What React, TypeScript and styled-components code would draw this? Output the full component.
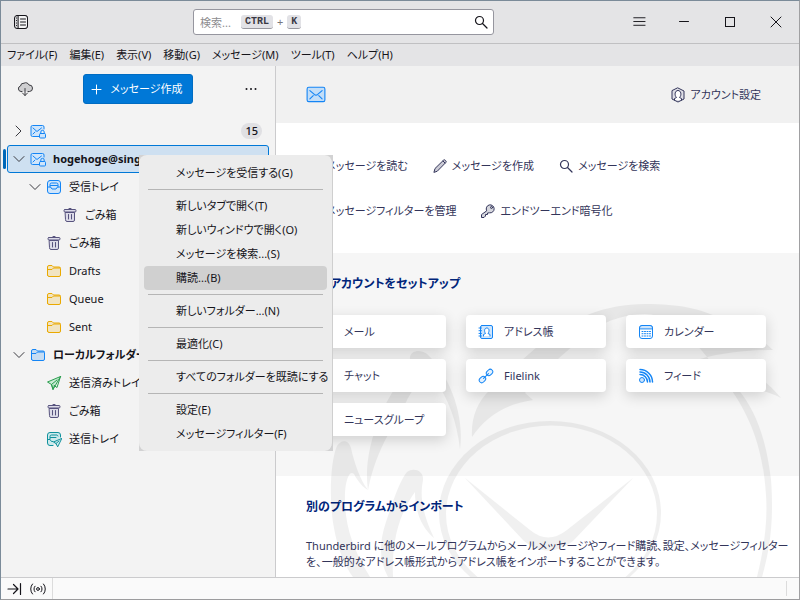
import React from "react";
import styled, { createGlobalStyle, css } from "styled-components";

const GlobalStyle = createGlobalStyle`
  *, *::before, *::after { box-sizing: border-box; }
  body {
    margin: 0;
    color: #15141a;
    font: 11px/16px "Noto Sans", "Noto Sans CJK JP", sans-serif;
    font-feature-settings: "palt";
  }
  button {
    margin: 0;
    padding: 0;
    border: 0;
    background: none;
    color: inherit;
    font: inherit;
    font-feature-settings: inherit;
    white-space: nowrap;
  }
  ul { list-style: none; margin: 0; padding: 0; }
  a { color: inherit; text-decoration: none; }
`;

/* ---------- icons ---------- */

const Svg = styled.svg<{ $size?: number }>`
  display: block;
  flex: none;
  width: ${(p) => p.$size ?? 16}px;
  height: ${(p) => p.$size ?? 16}px;
  fill: none;
  stroke: currentColor;
  stroke-linecap: round;
  stroke-linejoin: round;
`;

type IconProps = { size?: number };
const icon = (drawing: React.ReactNode, box = "0 0 16 16") =>
  function Icon({ size }: IconProps) {
    return (
      <Svg $size={size} viewBox={box} aria-hidden="true">
        {drawing}
      </Svg>
    );
  };

const SpacesIcon = icon(
  <>
    <rect x="1.5" y="1.5" width="13" height="13" rx="2.5" fill="#d8d8da" />
    <path d="M5.5 1.5h6.5a2.5 2.5 0 0 1 2.5 2.5v8a2.5 2.5 0 0 1-2.5 2.5H5.5z" fill="#f4f4f5" />
    <path d="M7.5 5h5M7.5 8h5M7.5 11h5M3.5 4v.1M3.5 6.5v.1M3.5 9v.1M3.5 11.5v.1" />
  </>
);
const SearchIcon = icon(
  <>
    <circle cx="6.5" cy="6.5" r="4" strokeWidth="1.2" />
    <path d="M9.5 9.5l4.500 4.500" strokeWidth="1.2" />
  </>
);
const MenuIcon = icon(<path d="M4 3.500h12M4 7.500h12M4 11.500h12" />, "0 0 17 16");
const MinimizeIcon = icon(<path d="M3.500 7.500h9" />);
const MaximizeIcon = icon(<rect x="3.500" y="3.500" width="9" height="9" strokeLinejoin="miter" />);
const CloseIcon = icon(<path d="M3 3l10 10M13 3L3 13" />);
const CloudIcon = icon(
  <>
    <path
      d="M5 10.500H4A2.800 2.800 0 0 1 3.500 5 3.200 3.200 0 0 1 7 2.200 3.500 3.500 0 0 1 12 4a3.200 3.200 0 0 1 .5 6.500H11"
      fill="#cfcfd1"
      stroke="#3d3d42"
    />
    <path d="M8 7.500v7M5.500 12L8 14.500 10.500 12" stroke="#3d3d42" />
  </>
);
const PlusIcon = icon(<path d="M8.500 4v9M4 8.500h9" />);
const DotsIcon = icon(
  <g fill="currentColor" stroke="none">
    <circle cx="3.500" cy="8" r="1" />
    <circle cx="8" cy="8" r="1" />
    <circle cx="12.500" cy="8" r="1" />
  </g>
);
const RightIcon = icon(<path d="M3 1l5 5-5 5" />, "0 0 12 12");
const DownIcon = icon(<path d="M1 3.500l5 5 5-5" />, "0 0 12 12");
const SecureMailIcon = icon(
  <>
    <path d="M9 13.500H2.500a1.500 1.500 0 0 1-1.500-1.500V4a1.500 1.500 0 0 1 1.500-1.500h10A1.500 1.500 0 0 1 14 4v2" fill="#cfe5fb" />
    <path d="M3 5l4 3.500 4.500-3.500M3 11l2-2" />
    <rect x="9.500" y="10.500" width="6" height="4.500" rx="1" fill="#cfe5fb" />
    <path d="M10.800 10.500V9a1.700 1.700 0 0 1 3.400 0v1.500" />
  </>
);
const InboxIcon = icon(
  <>
    <rect x="1.500" y="1.500" width="13" height="13" rx="2.500" fill="#cfe5fb" />
    <path d="M1.500 8H4.500l1.500 2h4l1.500-2h3M4 8V5.500A1.500 1.500 0 0 1 5.500 4h5A1.500 1.500 0 0 1 12 5.500V8" />
    <path d="M4.500 6.500h7" />
  </>
);
const TrashIcon = icon(
  <>
    <path d="M3.500 5.500h9V13a1.500 1.500 0 0 1-1.500 1.500H5A1.500 1.500 0 0 1 3.500 13z" fill="#dcdbe8" />
    <rect x="2" y="2.500" width="12" height="2.500" rx="1" fill="#dcdbe8" />
    <path d="M6 2.500C6 .9 10 .9 10 2.500M6.500 7.500v4.500M9.500 7.500v4.500" />
  </>
);
const FolderIcon = icon(
  <path
    d="M1.500 12V4A1.500 1.500 0 0 1 3 2.500h3L7.500 4H13A1.500 1.500 0 0 1 14.500 5.500V12A1.500 1.500 0 0 1 13 13.500H3A1.500 1.500 0 0 1 1.500 12zM1.500 6.500H6L7.500 5H14"
    fill="currentColor"
    fillOpacity="0.200"
  />
);
const SentIcon = icon(
  <>
    <path d="M14.500 1.500L1.500 7l4 2.500 1.500 5L14.500 1.500z" fill="#c9ecd5" />
    <path d="M5.500 9.500L11 5M5.500 9.500L7 14.500l1.500-4" />
    <path d="M8 10.500l3 2L14.500 1.500" />
  </>
);
const OutboxIcon = icon(
  <>
    <path d="M7 14.500H4A2.500 2.500 0 0 1 1.500 12V4A2.500 2.500 0 0 1 4 1.500h8A2.500 2.500 0 0 1 14.500 4v2" fill="#cdeaec" />
    <path d="M1.500 8.500H4l1.500 2H7M4 8V5.500A1.500 1.500 0 0 1 5.500 4h5.500A1.500 1.500 0 0 1 12 5M4.500 6.500H10" />
    <path d="M15.500 7.500L7.500 11l2.500 1.500 1.500 3zM10 12.500l3-2.500" fill="#cdeaec" />
  </>
);
const MailIcon = icon(
  <>
    <rect x="1" y="1.500" width="16" height="13" rx="1.500" fill="#c3def8" />
    <path d="M3.500 4.500l4 3.500q1.500 1.200 3 0l4-3.500M3.500 12l3-3M14.500 12l-3-3" />
  </>,
  "0 0 18 17"
);
const SmallMailIcon = icon(
  <>
    <rect x="1.500" y="3" width="12" height="10" rx="1.500" fill="#cfe5fb" />
    <path d="M3.500 5.500l4 3 4-3" />
  </>
);
const AccountIcon = icon(
  <>
    <path d="M8 1l6 3v8l-6 3-6-3V4z" fill="#dedee6" />
    <path d="M4.500 13v-1.500l2-1C4 8 5 3.500 8 3.500s4 4.500 1.500 7l2 1V13" fill="#fff" />
  </>
);
const PencilIcon = icon(
  <path d="M2 14l1-3.500L11.500 2.200a1.200 1.200 0 0 1 1.700 0l.6.6a1.200 1.200 0 0 1 0 1.700L5.500 13zM11 3l2 2" fill="currentColor" fillOpacity="0.250" />
);
const KeyIcon = icon(
  <>
    <path
      d="M6.500 7.500A4 4 0 1 1 9.500 9.800L7.500 10v1.500H5.500V13L4 14.500H1.500V12z"
      fill="currentColor"
      fillOpacity="0.200"
    />
    <circle cx="11.500" cy="4.500" r="1" />
  </>
);
const AddressIcon = icon(
  <>
    <rect x="2.500" y="1.500" width="12" height="13" rx="1.500" fill="#cfe5fb" />
    <path d="M1 4h2.500M1 6.700h2.500M1 9.400h2.500M1 12h2.500" />
    <path d="M5.500 12v-1.500l2-1C5.800 7 6.500 4 8.800 4s3 3 1.200 5.500l2 1V12" fill="#fff" />
  </>
);
const CalendarIcon = icon(
  <>
    <rect x="1.500" y="1.500" width="13" height="13" rx="2.500" />
    <path d="M1.500 4.500V4A2.500 2.500 0 0 1 4 1.500h8A2.500 2.500 0 0 1 14.500 4v.5z" fill="#cfe5fb" />
    <path d="M4 7.500h8.500M4 9.700h8.500M4 12h8.500" strokeDasharray="1 1.500" />
  </>
);
const LinkIcon = icon(
  <g transform="rotate(-45 8 8)">
    <rect x="-.5" y="5.500" width="7" height="5" rx="2.500" fill="#e4f1fd" />
    <rect x="9.500" y="5.500" width="7" height="5" rx="2.500" fill="#e4f1fd" />
    <path d="M4.500 8h7" />
  </g>
);
const FeedIcon = icon(
  <>
    <circle cx="4" cy="12" r="2.500" fill="#cfe5fb" />
    <path d="M2 1.500A12.500 12.500 0 0 1 14.500 14M2 4A10 10 0 0 1 12 14M2 6.500A7.500 7.500 0 0 1 9.500 14" strokeWidth="1.500" />
  </>
);
const ChatIcon = icon(<path d="M2.500 2.500h11v8H7l-3 3v-3H2.500z" fill="#cfe5fb" />);
const NewsIcon = icon(
  <>
    <rect x="2" y="2" width="12" height="12" rx="2" fill="#cfe5fb" />
    <path d="M5 5.500h6M5 8h6M5 10.500h6" />
  </>
);
const FilterIcon = icon(<path d="M2 2.500h12L9.500 8v5l-3 1.500V8z" />);
const CollapseIcon = icon(<path d="M2 8h9M7.500 3.500L12 8l-4.500 4.500M14.500 2.500v11" strokeWidth="1.200" />);
const OnlineIcon = icon(
  <>
    <circle cx="8" cy="8" r="1.400" />
    <path d="M5 5.200a4 4 0 0 0 0 5.600M11 5.200a4 4 0 0 1 0 5.600M2.500 3a7.500 7.500 0 0 0 0 10M13.500 3a7.500 7.500 0 0 1 0 10" />
  </>
);

/* ---------- window frame ---------- */

const Window = styled.div`
  position: relative;
  display: flex;
  flex-direction: column;
  height: 100vh;
  overflow: hidden;
  background: #f3f3f3;
  border: 1px solid #7b8b99;
  border-right-color: #a0a0a2;
  border-bottom-color: #9c9c9e;
`;

const TitleBar = styled.header`
  display: grid;
  grid-template-columns: 192px minmax(0, 301px) 1fr;
  align-items: center;
  height: 43px;
  flex: none;
  background: #e4e4e6;
  border-bottom: 1px solid #c0c0c2;
`;

const SpacesButton = styled.button`
  justify-self: start;
  padding: 4px 12px;
`;

const SearchBox = styled.div`
  display: grid;
  grid-template-columns: minmax(0, 1fr) 20px;
  align-items: center;
  height: 26px;
  background: #fff;
  border: 1px solid #96969f;
  border-radius: 3px;
`;

const SearchInput = styled.input`
  grid-area: 1 / 1;
  width: 100%;
  height: 24px;
  padding: 0 6px;
  border: 0;
  outline: 0;
  background: none;
  font: inherit;
  font-feature-settings: inherit;
  &::placeholder { color: #8d8d90; opacity: 1; }
`;

const Shortcut = styled.span`
  grid-area: 1 / 1;
  display: flex;
  align-items: center;
  gap: 4px;
  padding-left: 47px;
  color: #77777c;
  pointer-events: none;
`;

const Key = styled.kbd`
  padding: 0 4px;
  border-radius: 3px;
  border-bottom: 1px solid #98989f;
  background: #e2e2e6;
  color: #3a3944;
  font: bold 10px/13px "Liberation Mono", monospace;
`;

const WindowButtons = styled.div`
  display: flex;
  justify-content: flex-end;
`;

const WindowButton = styled.button`
  display: grid;
  place-items: center;
  width: 46px;
  height: 42px;
`;

const MenuBar = styled.nav`
  display: flex;
  flex: none;
  height: 22px;
  background: #e4e4e6;
`;

const MenuBarItem = styled.button`
  padding: 0 6px;
`;

const Body = styled.div`
  display: flex;
  flex: 1;
  min-height: 0;
`;

/* ---------- folder pane ---------- */

const FolderPane = styled.aside`
  flex: 0 0 275px;
  border-right: 1px solid #cbcbcd;
  background: #f3f3f3;
`;

const PaneHeader = styled.div`
  display: flex;
  align-items: center;
  justify-content: space-between;
  height: 46px;
  padding: 0 16px;
`;

const ComposeButton = styled.button`
  display: flex;
  align-items: center;
  gap: 6px;
  height: 30px;
  padding: 0 9px 0 4px;
  border: 1px solid #006cc2;
  border-radius: 3px;
  background: #0078d7;
  color: #fff;
`;

const Tree = styled.ul`
  padding: 5px 6px;
`;

const Row = styled.li<{ $level: number; $selected?: boolean; $bold?: boolean }>`
  position: relative;
  display: flex;
  align-items: center;
  height: 28px;
  padding-left: ${(p) => 5 + p.$level * 16}px;
  padding-right: 6px;
  border: 1px solid transparent;
  border-radius: 3px;
  white-space: nowrap;
  font-weight: ${(p) => (p.$bold ? 700 : 400)};
  ${(p) =>
    p.$selected &&
    css`
      border-color: #0078d7;
      background: #cee0f1;
      &::before {
        content: "";
        position: absolute;
        left: -5px;
        top: 3px;
        width: 3px;
        height: 20px;
        border-radius: 2px;
        background: #0067b8;
      }
    `}
`;

const Twisty = styled.button`
  display: grid;
  place-items: center;
  width: 12px;
  height: 20px;
  margin-right: 5px;
  flex: none;
  color: #3a3a40;
`;

const TwistySpace = styled.span`
  width: 17px;
  flex: none;
`;

const Tint = styled.span<{ $color: string }>`
  display: block;
  flex: none;
  color: ${(p) => p.$color};
`;

const RowName = styled.span`
  flex: 1;
  margin-left: 7px;
`;

const Badge = styled.span`
  padding: 0 4px;
  border-radius: 8px;
  background: #e0e0e3;
  font-weight: 500;
`;

/* ---------- account page ---------- */

const Main = styled.main`
  position: relative;
  flex: 1;
  min-width: 0;
  overflow: hidden;
  background: #fff;
  color: #33355a;
`;

const AccountHeader = styled.div`
  display: flex;
  align-items: center;
  justify-content: space-between;
  height: 57px;
  padding: 0 38px 0 30px;
  background: #f1f1f1;
`;

const IconLink = styled.a`
  display: flex;
  align-items: center;
  gap: 4px;
  white-space: nowrap;
`;

const Links = styled.div`
  display: flex;
  flex-wrap: wrap;
  column-gap: 24px;
  height: 130px;
  padding: 20px 30px;
`;

const LinkItem = styled(IconLink)`
  height: 45px;
`;

const Section = styled.section<{ $shaded?: boolean }>`
  padding: 20px 30px 40px;
  background: ${(p) => (p.$shaded ? "#f6f6f6" : "transparent")};
`;

const SectionTitle = styled.h2`
  margin: 0;
  color: #00257a;
  font-size: 12px;
  line-height: 22px;
`;

const Cards = styled.div`
  position: relative;
  z-index: 1;
  display: grid;
  grid-template-columns: repeat(auto-fill, 140px);
  gap: 11px 20px;
  margin-top: 20px;
`;

const Card = styled.button`
  display: flex;
  align-items: center;
  gap: 10px;
  height: 33px;
  padding: 0 12px;
  border-radius: 4px;
  background: #fff;
  box-shadow: 0 4px 14px rgba(0, 0, 0, 0.16);
`;

const Paragraph = styled.p`
  margin: 20px 0 0;
  white-space: nowrap;
`;

const Watermark = styled.svg`
  position: absolute;
  left: 0;
  top: 187px;
  width: 523px;
  height: 324px;
  fill: #000;
  opacity: 0.055;
  pointer-events: none;
`;

/* ---------- context menu ---------- */

const MenuShadow = styled.div`
  position: absolute;
  z-index: 2;
  left: 138px;
  top: 154px;
  width: 194px;
  background: #d2d2d3;
`;

const MenuList = styled.ul`
  padding: 6px 5px 5px;
  border-right: 1px solid #cfcfcf;
  border-radius: 8px;
  background: #ececec;
`;

const MenuItem = styled.button<{ $active?: boolean }>`
  display: block;
  width: 100%;
  height: 24px;
  padding: 0 0 0 32px;
  border-radius: 4px;
  text-align: left;
  background: ${(p) => (p.$active ? "#d0d0d0" : "none")};
`;

const Separator = styled.li`
  height: 1px;
  margin: 4px;
  background: #b5b5b5;
`;

/* ---------- status bar ---------- */

const StatusBar = styled.footer`
  display: flex;
  flex: none;
  height: 22px;
  background: #fafafa;
  border-top: 1px solid #cbcbcd;
`;

const StatusIcons = styled.div`
  display: flex;
  align-items: center;
  gap: 8px;
  padding: 0 6px 0 5px;
  border-right: 1px solid #dcdcdc;
`;

const StatusEnd = styled.div`
  width: 13px;
  margin: 3px 0 3px auto;
  border-left: 1px solid #dcdcdc;
`;

/* ---------- data ---------- */

const menuBar = ["ファイル(F)", "編集(E)", "表示(V)", "移動(G)", "メッセージ(M)", "ツール(T)", "ヘルプ(H)"];

type Folder = {
  name: string;
  level: number;
  Icon: React.ComponentType<IconProps>;
  color: string;
  twisty?: "open" | "closed";
  bold?: boolean;
  selected?: boolean;
  count?: number;
};

const BLUE = "#1485f5";
const PURPLE = "#57537e";
const YELLOW = "#eaa900";

const folders: Folder[] = [
  { name: "", level: 0, Icon: SecureMailIcon, color: BLUE, twisty: "closed", count: 15 },
  { name: "hogehoge@sing", level: 0, Icon: SecureMailIcon, color: BLUE, twisty: "open", bold: true, selected: true },
  { name: "受信トレイ", level: 1, Icon: InboxIcon, color: BLUE, twisty: "open" },
  { name: "ごみ箱", level: 2, Icon: TrashIcon, color: PURPLE },
  { name: "ごみ箱", level: 1, Icon: TrashIcon, color: PURPLE },
  { name: "Drafts", level: 1, Icon: FolderIcon, color: YELLOW },
  { name: "Queue", level: 1, Icon: FolderIcon, color: YELLOW },
  { name: "Sent", level: 1, Icon: FolderIcon, color: YELLOW },
  { name: "ローカルフォルダー", level: 0, Icon: FolderIcon, color: BLUE, twisty: "open", bold: true },
  { name: "送信済みトレイ", level: 1, Icon: SentIcon, color: "#2a9d4e" },
  { name: "ごみ箱", level: 1, Icon: TrashIcon, color: PURPLE },
  { name: "送信トレイ", level: 1, Icon: OutboxIcon, color: "#0f919c" },
];

const links = [
  { name: "メッセージを読む", Icon: MailIcon },
  { name: "メッセージを作成", Icon: PencilIcon },
  { name: "メッセージを検索", Icon: SearchIcon },
  { name: "メッセージフィルターを管理", Icon: FilterIcon },
  { name: "エンドツーエンド暗号化", Icon: KeyIcon },
];

const cards = [
  { name: "メール", Icon: SmallMailIcon },
  { name: "アドレス帳", Icon: AddressIcon },
  { name: "カレンダー", Icon: CalendarIcon },
  { name: "チャット", Icon: ChatIcon },
  { name: "Filelink", Icon: LinkIcon },
  { name: "フィード", Icon: FeedIcon },
  { name: "ニュースグループ", Icon: NewsIcon },
];

const contextMenu = [
  ["メッセージを受信する(G)"],
  ["新しいタブで開く(T)", "新しいウィンドウで開く(O)", "メッセージを検索...(S)", "購読...(B)"],
  ["新しいフォルダー...(N)"],
  ["最適化(C)"],
  ["すべてのフォルダーを既読にする"],
  ["設定(E)", "メッセージフィルター(F)"],
];

function FolderRow({ folder }: { folder: Folder }) {
  const { name, level, Icon, color, twisty, bold, selected, count } = folder;
  return (
    <Row role="treeitem" aria-selected={!!selected} $level={level} $selected={selected} $bold={bold}>
      {twisty ? (
        <Twisty aria-label={twisty === "open" ? "折りたたむ" : "展開"}>
          {twisty === "open" ? <DownIcon size={12} /> : <RightIcon size={12} />}
        </Twisty>
      ) : (
        <TwistySpace />
      )}
      <Tint $color={color}>
        <Icon />
      </Tint>
      <RowName>{name}</RowName>
      {count && <Badge>{count}</Badge>}
    </Row>
  );
}

function Bird() {
  return (
    <Watermark viewBox="276 253 523 324" aria-hidden="true">
      <path d="M410 357C411 350 421 349 427 354C447 372 465 412 460 449C457 422 448 397 435 381C424 372 416 384 408 398C396 424 377 445 368 490C360 480 354 462 351 448C348 439 341 440 337 446C330 462 329 502 334 528C338 550 345 566 353 577H388C379 560 379 543 386 522C392 504 400 480 407 472C414 467 424 471 423 480C419 498 424 517 434 538C422 528 415 512 415 492C402 510 391 536 393 577H370C350 545 344 520 345 492C346 478 350 470 354 474C358 482 364 488 368 490C365 470 368 444 382 412C392 390 406 372 410 367C416 360 409 362 410 357Z" />
      <path d="M472 437C471 418 477 402 490 390C510 371 526 356 545 340C572 318 606 304 645 304C680 304 701 309 722 319C742 328 757 335 773 350C744 350 722 353 700 359C727 359 756 368 781 398C766 390 752 388 738 389C755 410 766 437 771 480C774 520 770 549 762 577H757C764 549 768 520 766 495C763 446 749 415 730 388C706 354 678 315 645 314C616 315 593 326 575 344C555 362 539 374 525 393L533 400C506 404 486 416 472 437Z" />
      <path
        fillRule="evenodd"
        d="M439 513a111 92 0 1 0 222 0a111 92 0 1 0-222 0ZM446 514a105 88 0 1 0 211 0a105 88 0 1 0-211 0Z"
      />
      <path d="M465 478L530 530Q548 545 567 530L633 478L573 541Q548 560 524 541Z" />
    </Watermark>
  );
}

export default function App() {
  return (
    <>
      <GlobalStyle />
      <Window>
        <TitleBar>
          <SpacesButton aria-label="スペースツールバー">
            <SpacesIcon />
          </SpacesButton>
          <SearchBox>
            <SearchInput type="search" placeholder="検索..." aria-label="検索" />
            <Shortcut>
              <Key>CTRL</Key>+<Key>K</Key>
            </Shortcut>
            <button aria-label="検索を実行">
              <SearchIcon />
            </button>
          </SearchBox>
          <WindowButtons>
            <WindowButton aria-label="メニュー">
              <MenuIcon />
            </WindowButton>
            <WindowButton aria-label="最小化">
              <MinimizeIcon />
            </WindowButton>
            <WindowButton aria-label="最大化">
              <MaximizeIcon />
            </WindowButton>
            <WindowButton aria-label="閉じる">
              <CloseIcon />
            </WindowButton>
          </WindowButtons>
        </TitleBar>
        <MenuBar>
          {menuBar.map((name) => (
            <MenuBarItem key={name}>{name}</MenuBarItem>
          ))}
        </MenuBar>
        <Body>
          <FolderPane>
            <PaneHeader>
              <button aria-label="メッセージを受信">
                <CloudIcon />
              </button>
              <ComposeButton>
                <PlusIcon />
                メッセージ作成
              </ComposeButton>
              <button aria-label="フォルダーペインのオプション">
                <DotsIcon />
              </button>
            </PaneHeader>
            <Tree role="tree">
              {folders.map((folder, i) => (
                <FolderRow key={i} folder={folder} />
              ))}
            </Tree>
          </FolderPane>
          <Main>
            <AccountHeader>
              <Tint $color={BLUE}>
                <MailIcon size={20} />
              </Tint>
              <IconLink href="#settings">
                <AccountIcon />
                アカウント設定
              </IconLink>
            </AccountHeader>
            <Links>
              {links.map(({ name, Icon }) => (
                <LinkItem href="#" key={name}>
                  <Icon />
                  {name}
                </LinkItem>
              ))}
            </Links>
            <Section $shaded>
              <SectionTitle>別のアカウントをセットアップ</SectionTitle>
              <Cards>
                {cards.map(({ name, Icon }) => (
                  <Card key={name}>
                    <Tint $color={BLUE}>
                      <Icon />
                    </Tint>
                    {name}
                  </Card>
                ))}
              </Cards>
            </Section>
            <Section>
              <SectionTitle>別のプログラムからインポート</SectionTitle>
              <Paragraph>
                Thunderbird に他のメールプログラムからメールメッセージやフィード購読、設定、メッセージフィルター
                <br />
                を、一般的なアドレス帳形式からアドレス帳をインポートすることができます。
              </Paragraph>
            </Section>
            <Bird />
          </Main>
        </Body>
        <StatusBar>
          <StatusIcons>
            <CollapseIcon />
            <OnlineIcon />
          </StatusIcons>
          <StatusEnd />
        </StatusBar>
        <MenuShadow>
          <MenuList role="menu">
            {contextMenu.map((group, i) => (
              <React.Fragment key={i}>
                {i > 0 && <Separator role="separator" />}
                {group.map((name) => (
                  <li role="none" key={name}>
                    <MenuItem role="menuitem" $active={name.startsWith("購読")}>
                      {name}
                    </MenuItem>
                  </li>
                ))}
              </React.Fragment>
            ))}
          </MenuList>
        </MenuShadow>
      </Window>
    </>
  );
}
